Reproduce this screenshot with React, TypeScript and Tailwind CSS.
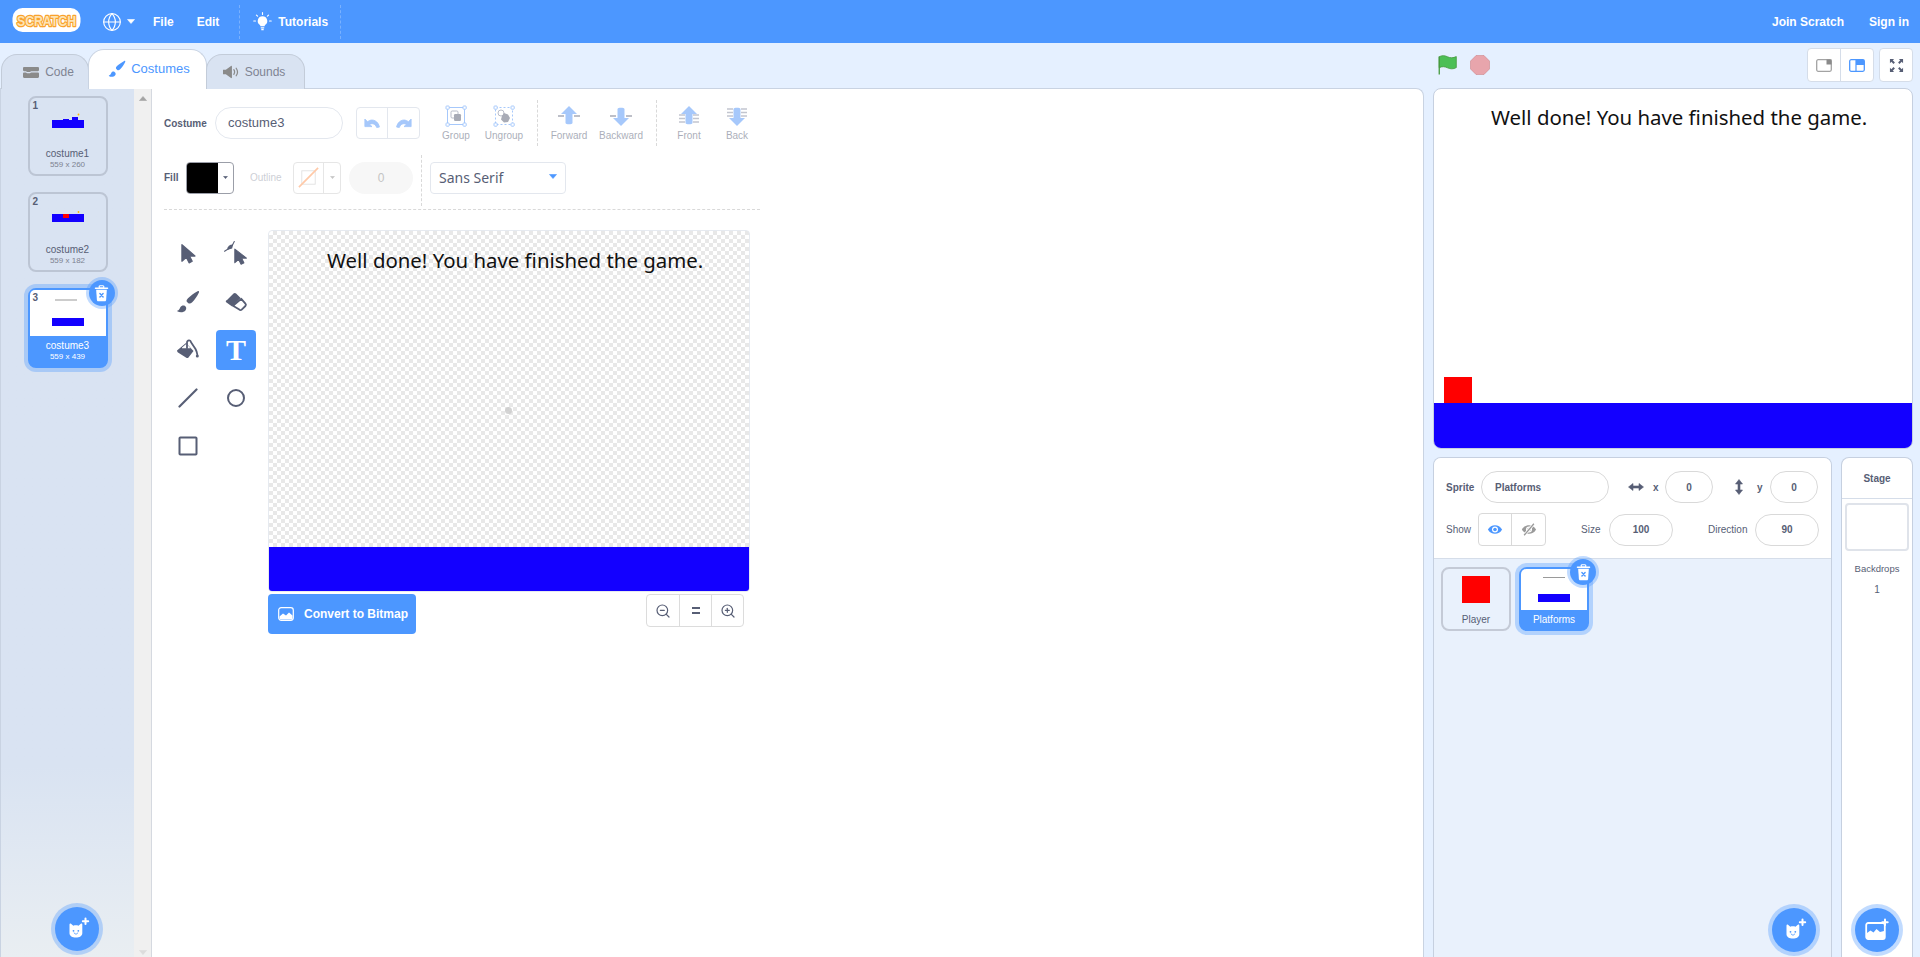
import React from "react";
import { Globe, ZoomIn, ZoomOut } from "lucide-react";

const G = "#575e75";
const B = "#4c97ff";

function Caret({ className = "" }: { className?: string }) {
  return (
    <svg viewBox="0 0 8 5" className={className}>
      <path d="M0.5 0.5h7L4 4.5z" fill="currentColor" stroke="currentColor" strokeWidth="0.6" strokeLinejoin="round" />
    </svg>
  );
}

function Logo() {
  const t = { x: 5, y: 19, fontFamily: "'Liberation Sans',sans-serif", fontWeight: 700, fontSize: 15, textLength: 59, lengthAdjust: "spacingAndGlyphs" as const };
  return (
    <svg viewBox="0 0 69 26" className="w-[69px] h-[26px] -mt-[4px] overflow-visible">
      <rect x="0.500" y="1" width="68" height="24" rx="10" fill="#fff" />
      <text {...t} fill="#fde3b4" stroke="#f9a22c" strokeWidth="2.600" strokeLinejoin="round" paintOrder="stroke">SCRATCH</text>
    </svg>
  );
}

function Bulb() {
  return (
    <svg viewBox="0 0 20 20" className="w-[19px] h-[19px]">
      <path d="M10 4.500a5 5 0 0 0-3 9c.6.500.8 1 .8 1.600h4.400c0-.6.2-1.100.8-1.600a5 5 0 0 0-3-9z" fill="#fff" />
      <rect x="8" y="16" width="4" height="1.400" rx=".7" fill="#fff" />
      <rect x="8.600" y="18" width="2.800" height="1.200" rx=".6" fill="#fff" />
      <path d="M10 .7v1.800M3.600 3.200l1.200 1.200M16.400 3.200l-1.200 1.200M.8 9.500h1.800M17.400 9.500h1.800" stroke="#fff" strokeWidth="1.200" strokeLinecap="round" />
    </svg>
  );
}

function CodeIcon() {
  return (
    <svg viewBox="0 0 16 11" className="w-4 h-[11px]">
      <path d="M0 1.200C0 .5.5 0 1.200 0h13.600c.7 0 1.200.5 1.200 1.200v1.800c0 .7-.5 1.200-1.200 1.200H8L7 5H4L3 4.200H1.200C.5 4.200 0 3.700 0 3z" fill="#8a8a8a" />
      <path d="M0 6.600c0-.6.5-1.100 1.200-1.100H3l1 .8h3l1-.8h6.800c.7 0 1.200.5 1.200 1.100v3.200c0 .7-.5 1.200-1.200 1.200H1.200C.5 11 0 10.500 0 9.800z" fill="#8a8a8a" />
    </svg>
  );
}

function BrushIcon({ color, className }: { color: string; className: string }) {
  return (
    <svg viewBox="0 0 20 20" className={className}>
      <path d="M18 1c.9-.4 1.500.3 1.100 1.100-1.400 2.900-3.500 6-5.600 8.200-1 1-2.200 1.300-3.200.8l-1.300-1.300c-.5-1 0-2 1-3C12 4.900 15.100 2.500 18 1z" fill={color} />
      <path d="M1 17.200c1.800-.2 2-1.700 2.700-3 .8-1.300 2.300-1.800 3.600-1 1.400.8 1.600 2.500.7 3.700-1.500 2-4.700 2.300-7 .8z" fill={color} />
    </svg>
  );
}

function SoundIcon() {
  return (
    <svg viewBox="0 0 17 14" className="w-[16px] h-[14px]">
      <path d="M0 4.500h3L8.500.5c.5-.3 1 0 1 .6v11.800c0 .6-.5.9-1 .6L3 9.500H0z" fill="#8a8a8a" />
      <path d="M11.500 4.500c1 1.500 1 3.500 0 5M14 3c1.800 2.500 1.800 5.500 0 8" stroke="#8a8a8a" strokeWidth="1.300" fill="none" strokeLinecap="round" />
    </svg>
  );
}

function Tab({ label, icon, active, width }: { label: string; icon: React.ReactNode; active?: boolean; width?: string }) {
  if (active) {
    return (
      <div className="w-[119px] h-[40px] -mb-px z-10 flex items-center justify-center gap-[5px] bg-white border border-b-0 border-[#c9d3e2] rounded-t-2xl text-[13px] text-[#4c97ff] pb-[1px] pl-[3px]">
        {icon}
        <span>{label}</span>
      </div>
    );
  }
  return (
    <div className={`${width} h-[35px] -mb-px flex items-center justify-center gap-[6px] bg-[#d9e3f2] border border-b-0 border-[#c3ccd9] rounded-t-2xl text-[12px] text-[#7f8492]`}>
      {icon}
      <span>{label}</span>
    </div>
  );
}

function Thumb1() {
  return (
    <svg viewBox="0 0 76 46" className="w-[76px] h-[46px]">
      <path d="M22 22h11v-1h6v1h3v-3h6v3h6v8H22z" fill="#1300ff" />
      <circle cx="48.500" cy="16.500" r=".9" fill="#ffb400" />
    </svg>
  );
}
function Thumb2() {
  return (
    <svg viewBox="0 0 76 46" className="w-[76px] h-[46px]">
      <rect x="22" y="20" width="32" height="8" fill="#1300ff" />
      <rect x="33" y="20" width="6" height="4" fill="#f00" />
      <circle cx="48.500" cy="18" r=".9" fill="#ffb400" />
    </svg>
  );
}
function Thumb3() {
  return (
    <svg viewBox="0 0 76 46" className="w-[76px] h-[46px]">
      <rect x="25" y="9.500" width="22" height="1" fill="#9a9a9a" />
      <rect x="22" y="28" width="32" height="8" fill="#1300ff" />
    </svg>
  );
}

function Trash() {
  return (
    <div className="absolute top-[-10px] right-[-9px] w-[26px] h-[26px] rounded-full bg-[#4c97ff] shadow-[0_0_0_3px_#4c97ff59] flex items-center justify-center">
      <svg viewBox="0 0 16 18" className="w-[15px] h-[17px]">
        <rect x="0.800" y="2.600" width="14.400" height="1.500" rx=".7" fill="#fff" />
        <rect x="5.500" y="0.700" width="5" height="2.500" rx="1" fill="none" stroke="#fff" strokeWidth="1.200" />
        <path d="M2.300 5h11.400l-.8 11c-.1.800-.6 1.300-1.300 1.300H4.400c-.7 0-1.200-.5-1.300-1.300z" fill="#fff" />
        <path d="M6.300 9l3.400 3.800M9.700 9l-3.400 3.800" stroke="#4c97ff" strokeWidth="1.500" strokeLinecap="round" />
      </svg>
    </div>
  );
}

function CostumeCard({ n, name, dims, selected, thumb }: { n: number; name: string; dims: string; selected?: boolean; thumb: React.ReactNode }) {
  return (
    <div className={selected
      ? "relative w-[80px] h-[80px] shrink-0 border-2 border-[#4c97ff] rounded-lg bg-[#4c97ff] shadow-[0_0_0_4px_#4c97ff59]"
      : "relative w-[80px] h-[80px] shrink-0 border-2 border-[#bcc5d4] rounded-lg"}>
      <div className={selected ? "bg-white rounded-t-[5px]" : ""}>{thumb}</div>
      <div className={selected ? "text-center text-white" : "text-center text-[#575e75]"}>
        <div className="text-[10px] leading-[12px] mt-[4px]">{name}</div>
        <div className={selected ? "text-[8px] leading-[10px]" : "text-[8px] leading-[10px] text-[#7d8291]"}>{dims}</div>
      </div>
      <span className="absolute left-[3px] top-[1px] text-[10px] leading-[14px] font-bold text-[#575e75]">{n}</span>
      {selected && <Trash />}
    </div>
  );
}

function Cat() {
  return (
    <svg viewBox="-2 0 26 26" className="w-[26px] h-[26px]">
      <path d="M3.500 8.500c0-.8.9-1.200 1.500-.7l2.300 1.900c1.600-.5 3.600-.5 5.200 0l2.300-1.900c.6-.5 1.500-.1 1.500.7v8.700c0 2.800-2.800 4.300-6.400 4.300s-6.400-1.500-6.400-4.300z" fill="#fff" />
      <circle cx="7.500" cy="14.800" r=".9" fill="#4c97ff" />
      <circle cx="12.300" cy="14.800" r=".9" fill="#4c97ff" />
      <path d="M8.300 17c.4 1.100 1 1.300 1.600.8.600.5 1.200.3 1.600-.8" fill="none" stroke="#4c97ff" strokeWidth=".9" strokeLinecap="round" />
      <path d="M19.500 2.500v5.400M16.800 5.200h5.400" stroke="#fff" strokeWidth="2" strokeLinecap="round" />
    </svg>
  );
}

function Backdrop() {
  return (
    <svg viewBox="0 0 24 24" className="w-[24px] h-[24px]">
      <rect x="1.200" y="5" width="18.600" height="16" rx="2" fill="none" stroke="#fff" strokeWidth="1.800" />
      <path d="M2 20v-5l3.500-2.500 3 2 3-3.500 3.500 3 4-1v7z" fill="#fff" />
      <path d="M20 1.500v5.400M17.300 4.200h5.400" stroke="#fff" strokeWidth="2" strokeLinecap="round" />
    </svg>
  );
}

function AddButton({ icon }: { icon: React.ReactNode }) {
  return (
    <div className="w-[44px] h-[44px] shrink-0 rounded-full bg-[#4c97ff] shadow-[0_0_0_4px_#4c97ff59] flex items-center justify-center">
      {icon}
    </div>
  );
}

function GroupIcon({ un }: { un?: boolean }) {
  return (
    <svg viewBox="0 0 22 22" className="w-[22px] h-[22px]">
      <rect x="2.500" y="2.500" width="17" height="17" fill="none" stroke="#a6c8fb" strokeWidth="1" strokeDasharray={un ? "2 2" : undefined} />
      {[[1, 1], [18, 1], [1, 18], [18, 18]].map(([x, y], i) => (
        <rect key={i} x={x} y={y} width="3.200" height="3.200" rx=".7" fill="#fff" stroke="#a6c8fb" strokeWidth="1" />
      ))}
      {un ? (
        <>
          <circle cx="8" cy="8" r="3" fill="#fff" stroke="#b8bcc8" strokeWidth="1" />
          <path d="M11 8l4 1.500 2 3.500-2 4-4 .5-3-3 1-3.500z" fill="#a8abb6" />
        </>
      ) : (
        <>
          <rect x="6" y="6" width="7" height="7" rx="1.200" fill="#fff" stroke="#b8bcc8" strokeWidth="1" />
          <rect x="9" y="9" width="7" height="7" rx="1.200" fill="#a8abb6" />
        </>
      )}
    </svg>
  );
}

function LayerIcon({ dir, lines }: { dir: "up" | "down"; lines: "one" | "many" }) {
  const arrow = dir === "up" ? "M11 1l8 8h-4.500v9c0 1.800-7 1.800-7 0V9H3z" : "M11 21l8-8h-4.500V4c0-1.800-7-1.800-7 0v9H3z";
  return (
    <svg viewBox="0 0 22 22" className="w-[22px] h-[22px]">
      {lines === "one" ? (
        <path d="M0 11h6M16 11h6" stroke="#a8abb6" strokeWidth="1.500" />
      ) : (
        <path d={dir === "up" ? "M1 10h6M15 10h6M1 13.500h6M15 13.500h6M1 17h6M15 17h6" : "M1 4h6M15 4h6M1 7.500h6M15 7.500h6M1 11h6M15 11h6"} stroke="#c2c5cf" strokeWidth="1.500" />
      )}
      <path d={arrow} fill="#a6c8fb" />
    </svg>
  );
}

function ToolAction({ label, width, icon }: { label: string; width: string; icon: React.ReactNode }) {
  return (
    <div className={`${width} flex flex-col items-center`}>
      {icon}
      <span className="text-[10px] leading-[12px] mt-[3px] text-[#575e75] opacity-50">{label}</span>
    </div>
  );
}

function Undo({ flip }: { flip?: boolean }) {
  return (
    <svg viewBox="0 0 18 14" className={flip ? "w-[16px] h-[13px] -scale-x-100" : "w-[16px] h-[13px]"}>
      <path d="M1 2v8.500h8L6.300 8c1.800-1.300 6.200-1.600 8 3.500l3-.5C16.300 4.500 9.500.5 4 5z" fill="#a6c8fb" stroke="#a6c8fb" strokeWidth="1" strokeLinejoin="round" />
    </svg>
  );
}

function Cursor({ className = "w-[20px] h-[20px]" }: { className?: string }) {
  return (
    <svg viewBox="0 0 20 20" className={className}>
      <path d="M4.500 1.500v15l4-3.500 2.500 5 2.800-1.400-2.500-4.800h5z" fill={G} stroke={G} strokeWidth="1.200" strokeLinejoin="round" />
    </svg>
  );
}

function Tool({ children, active }: { children: React.ReactNode; active?: boolean }) {
  return (
    <div className="w-[48px] h-[48px] flex items-center justify-center">
      {active ? <div className="w-[40px] h-[40px] rounded-[4px] bg-[#4c97ff] flex items-center justify-center">{children}</div> : children}
    </div>
  );
}

function Pill({ className, children }: { className: string; children?: React.ReactNode }) {
  return <div className={`${className} h-[32px] shrink-0 rounded-full bg-white border border-[#d9d9d9] flex items-center text-[10px] font-bold text-[#575e75]`}>{children}</div>;
}

function SmallEye({ off }: { off?: boolean }) {
  const c = off ? "#9a9a9a" : B;
  return (
    <svg viewBox="0 0 18 14" className="w-[16px] h-[13px]">
      <path d="M1 7c3.500-6.500 12.500-6.500 16 0-3.500 6.500-12.500 6.500-16 0z" fill={c} />
      <circle cx="9" cy="7" r="3.400" fill="#fff" />
      <circle cx="9" cy="7" r="2" fill={c} />
      {off && <path d="M14.500 .5L3.500 13.500" stroke="#fff" strokeWidth="3.200" />}
      {off && <path d="M14.500 .5L3.500 13.500" stroke={c} strokeWidth="1.500" />}
    </svg>
  );
}

function Arrows({ vertical }: { vertical?: boolean }) {
  return (
    <svg viewBox="0 0 16 16" className={vertical ? "w-[16px] h-[16px] rotate-90" : "w-[16px] h-[16px]"}>
      <path d="M0.500 8L5 4.500v2.500h6V4.500L15.500 8 11 11.500V9H5v2.500z" fill={G} stroke={G} strokeWidth=".6" strokeLinejoin="round" />
    </svg>
  );
}

export default function App() {
  return (
    <div className="w-[1920px] h-[957px] overflow-hidden flex flex-col bg-[#e5f0ff] font-['Liberation_Sans',sans-serif] text-[#575e75]">
      {/* header */}
      <header className="h-[43px] shrink-0 bg-[#4c97ff] flex items-center text-white text-[12px] font-bold pl-[12px] pr-[11px]">
        <Logo />
        <Globe className="w-[20px] h-[20px] ml-[21px]" strokeWidth={1.400} />
        <Caret className="w-[8px] h-[5px] ml-[5px]" />
        <span className="ml-[18px]">File</span>
        <span className="ml-[23px]">Edit</span>
        <div className="ml-[20px] h-[34px] border-l border-dashed border-[#ffffff40]" />
        <div className="ml-[13px]"><Bulb /></div>
        <span className="ml-[6px]">Tutorials</span>
        <div className="ml-[12px] h-[34px] border-l border-dashed border-[#ffffff40]" />
        <span className="ml-auto">Join Scratch</span>
        <span className="ml-[25px]">Sign in</span>
      </header>

      <div className="flex-1 min-h-0 flex">
        {/* left column */}
        <div className="w-[1424px] shrink-0 flex flex-col min-h-0">
          <div className="h-[45px] shrink-0 flex items-end pl-[1px] relative">
            <Tab label="Code" width="w-[88px] pl-[7px]" icon={<CodeIcon />} />
            <div className="-ml-[1px]">
              <Tab active label="Costumes" icon={<BrushIcon color={B} className="w-[18px] h-[18px]" />} />
            </div>
            <div className="-ml-[1px]">
              <Tab label="Sounds" width="w-[99px] pr-[3px]" icon={<SoundIcon />} />
            </div>
          </div>
          <div className="flex-1 min-h-0 flex border-t border-r border-l border-[#c9d3e2] rounded-tr-lg bg-white overflow-hidden">
            {/* costume list */}
            <div className="w-[133px] shrink-0 bg-linear-to-b from-[#d9e3f2] from-[78%] to-[#e9eef2] flex flex-col items-center pt-[7px] gap-[16px] pb-[6px]">
              <CostumeCard n={1} name="costume1" dims="559 x 260" thumb={<Thumb1 />} />
              <CostumeCard n={2} name="costume2" dims="559 x 182" thumb={<Thumb2 />} />
              <CostumeCard n={3} name="costume3" dims="559 x 439" selected thumb={<Thumb3 />} />
              <div className="mt-auto ml-[18px]"><AddButton icon={<Cat />} /></div>
            </div>
            {/* scrollbar */}
            <div className="w-[18px] shrink-0 bg-[#f0f0f0] border-r border-[#d5d9e0] flex flex-col items-center justify-between pt-[7px] pb-[2px]">
              <Caret className="w-[8px] h-[5px] rotate-180 text-[#a3a3a3]" />
              <Caret className="w-[8px] h-[5px] text-[#dcdcdc]" />
            </div>
            {/* paint editor */}
            <div className="flex-1 min-w-0 pl-[12px] pt-[11px]">
              <div className="h-[46px] flex items-center">
                <span className="w-[43px] text-[10px] font-bold whitespace-nowrap">Costume</span>
                <div className="ml-[8px] w-[128px] h-[32px] rounded-full border border-[#e3e7ee] flex items-center pl-[12px] text-[13px]">costume3</div>
                <div className="ml-[13px] w-[64px] h-[32px] rounded-[4px] border border-[#e3e7ee] flex items-center">
                  <div className="w-[31px] flex justify-center border-r border-[#e3e7ee] h-full items-center"><Undo /></div>
                  <div className="flex-1 flex justify-center"><Undo flip /></div>
                </div>
                <div className="ml-[12px] flex">
                  <ToolAction label="Group" width="w-[48px]" icon={<GroupIcon />} />
                  <ToolAction label="Ungroup" width="w-[48px]" icon={<GroupIcon un />} />
                </div>
                <div className="ml-[9px] h-[46px] border-l border-dashed border-[#d9d9d9]" />
                <div className="ml-[6px] flex gap-[2px]">
                  <ToolAction label="Forward" width="w-[50px]" icon={<LayerIcon dir="up" lines="one" />} />
                  <ToolAction label="Backward" width="w-[50px]" icon={<LayerIcon dir="down" lines="one" />} />
                </div>
                <div className="ml-[10px] h-[46px] border-l border-dashed border-[#d9d9d9]" />
                <div className="ml-[8px] flex">
                  <ToolAction label="Front" width="w-[48px]" icon={<LayerIcon dir="up" lines="many" />} />
                  <ToolAction label="Back" width="w-[48px]" icon={<LayerIcon dir="down" lines="many" />} />
                </div>
              </div>

              <div className="mt-[9px] h-[51px] pb-[6px] flex items-center">
                <span className="w-[15px] text-[10px] font-bold">Fill</span>
                <div className="ml-[7px] w-[48px] h-[32px] rounded-[4px] border border-[#9b9ea8] flex overflow-hidden">
                  <div className="w-[31px] bg-black" />
                  <div className="flex-1 flex items-center justify-center"><Caret className="w-[5px] h-[3px] text-[#575e75]" /></div>
                </div>
                <span className="ml-[16px] w-[34px] text-[10px] opacity-30">Outline</span>
                <div className="ml-[9px] w-[48px] h-[32px] rounded-[4px] border border-[#e6e6e6] flex">
                  <div className="w-[30px] border-r border-[#e6e6e6] flex items-center justify-center">
                    <svg viewBox="0 0 24 24" className="w-[23px] h-[23px]">
                      <rect x="5" y="5" width="14" height="14" fill="none" stroke="#e3e3e3" strokeWidth="1" />
                      <path d="M2 22L22 2" stroke="#ffc9a8" strokeWidth="1.800" />
                    </svg>
                  </div>
                  <div className="flex-1 flex items-center justify-center"><Caret className="w-[5px] h-[3px] text-[#c5c5c5]" /></div>
                </div>
                <div className="ml-[8px] w-[64px] h-[32px] rounded-full bg-[#f7f7f7] flex items-center justify-center text-[12px] text-[#c4c4c4]">0</div>
                <div className="ml-[8px] self-start h-[51px] border-l border-dashed border-[#d9d9d9]" />
                <div className="ml-[8px] w-[136px] h-[32px] rounded-[4px] border border-[#e3e7ee] flex items-center justify-between pl-[8px] pr-[8px] font-['Noto_Sans',sans-serif] text-[14px]">
                  <span>Sans Serif</span>
                  <Caret className="w-[8px] h-[5px] text-[#4c97ff] -mt-[3px]" />
                </div>
              </div>

              <div className="mt-[3px] w-[596px] border-t border-dashed border-[#d9d9d9]" />

              <div className="mt-[20px] flex items-start">
                <div className="w-[96px] grid grid-cols-2">
                  <Tool><Cursor className="w-[22px] h-[22px]" /></Tool>
                  <Tool>
                    <svg viewBox="0 0 24 24" className="w-[26px] h-[26px] ml-[1px]">
                      <path d="M10 7.500v12.500l3.500-3 2.300 4.500 2.600-1.300-2.200-4.400h4.500z" fill={G} stroke={G} strokeWidth="1" strokeLinejoin="round" />
                      <path d="M8.500 3.200a5 5 0 0 0-5.600 5l4.600-1.300z" fill={G} />
                      <path d="M9.500 .5L7.700 4M.5 9.500L4.500 7" stroke={G} strokeWidth="1" strokeLinecap="round" />
                    </svg>
                  </Tool>
                  <Tool><BrushIcon color={G} className="w-[24px] h-[24px]" /></Tool>
                  <Tool>
                    <svg viewBox="0 0 24 24" className="w-[24px] h-[24px]">
                      <path d="M2.500 10.500l7-7c.8-.8 1.800-.8 2.600 0l4.500 4.500-8.500 8.500-5.600-3.900c-.9-.6-1-1.800 0-2.600z" fill={G} />
                      <path d="M17.300 8.800l4.100 4.900c.7.800.6 1.700 0 2.300l-3.700 3.600c-.7.700-1.700.7-2.400 0l-6.300-3.800z" fill="#fff" stroke={G} strokeWidth="1.800" strokeLinejoin="round" />
                    </svg>
                  </Tool>
                  <Tool>
                    <svg viewBox="0 0 24 24" className="w-[24px] h-[24px]">
                      <path d="M1 12.500L10 5l7.500 8-5 6.500c-.6.700-1.500.7-2.200.2L2 14.500c-.8-.6-.8-1.400-1-2z" fill={G} />
                      <path d="M6 9.500l4.500-3.700 4 4.500H6z" fill="#fff" />
                      <path d="M11 10V4.500a2 2 0 0 1 4-.2L19.500 11c.8 1.500 1.500 3 1.800 5.500" fill="none" stroke={G} strokeWidth="1.800" strokeLinecap="round" />
                      <circle cx="21.300" cy="18" r="1.500" fill={G} />
                    </svg>
                  </Tool>
                  <Tool active>
                    <span className="font-['Liberation_Serif',serif] font-bold text-[30px] leading-none text-white">T</span>
                  </Tool>
                  <Tool>
                    <svg viewBox="0 0 20 20" className="w-[20px] h-[20px]"><path d="M1.500 18.500L18.500 1.500" stroke={G} strokeWidth="2.200" strokeLinecap="round" /></svg>
                  </Tool>
                  <Tool>
                    <svg viewBox="0 0 20 20" className="w-[20px] h-[20px]"><circle cx="10" cy="10" r="8" fill="none" stroke={G} strokeWidth="2" /></svg>
                  </Tool>
                  <Tool>
                    <svg viewBox="0 0 20 20" className="w-[20px] h-[20px]"><rect x="1.500" y="1.500" width="17" height="17" rx=".8" fill="none" stroke={G} strokeWidth="2" /></svg>
                  </Tool>
                </div>
                <div className="ml-[8px] w-[482px]">
                  <div className="relative h-[362px] border border-[#e6eaf0] rounded-[4px] overflow-hidden flex flex-col bg-[repeating-conic-gradient(#e8e8e8_0%_25%,#ffffff_0%_50%)] bg-[length:8px_8px]">
                    <div className="pl-[58px] pt-[14px] h-[316px] font-['Noto_Sans',sans-serif] text-[20.4px] leading-[30px] text-[#111] whitespace-nowrap">Well done! You have finished the game.</div>
                    <div className="h-[44px] bg-[#1300ff]" />
                    <div className="absolute left-[236px] top-[176px] w-[7px] h-[7px] rounded-full bg-[#c9c9c9] opacity-80" />
                  </div>
                  <div className="mt-[2px] flex items-start justify-between pr-[6px]">
                    <div className="w-[148px] h-[40px] rounded-[4px] bg-[#4c97ff] flex items-center pl-[10px] text-white text-[12px] font-bold">
                      <svg viewBox="0 0 16 14" className="w-[16px] h-[14px] mr-[10px]">
                        <rect x=".7" y=".7" width="14.600" height="12.600" rx="2.500" fill="none" stroke="#fff" strokeWidth="1.200" />
                        <path d="M1.500 12.500v-3l3.500-3 3 2 3-3 3.500 3v4z" fill="#fff" />
                      </svg>
                      Convert to Bitmap
                    </div>
                    <div className="w-[98px] h-[33px] rounded-[4px] border border-[#dcdcdc] flex">
                      <div className="w-[33px] flex items-center justify-center border-r border-[#dcdcdc]"><ZoomOut className="w-[16px] h-[16px]" strokeWidth={1.800} /></div>
                      <div className="w-[32px] flex items-center justify-center border-r border-[#dcdcdc]">
                        <div className="w-[8px] h-[7px] border-y-2 border-[#575e75]" />
                      </div>
                      <div className="flex-1 flex items-center justify-center"><ZoomIn className="w-[16px] h-[16px]" strokeWidth={1.800} /></div>
                    </div>
                  </div>
                </div>
              </div>
            </div>
          </div>
        </div>

        {/* right column */}
        <div className="ml-[9px] w-[480px] shrink-0 flex flex-col min-h-0">
          <div className="h-[45px] shrink-0 flex items-start pt-[5px]">
            <svg viewBox="0 0 20 20" className="w-[20px] h-[20px] ml-[5px] mt-[7px]">
              <path d="M1.200 1.800c3-1.700 5.500-1.400 8.300 0 2.700 1.300 5.700 1.300 8.800-.2v11c-3 1.700-6 1.500-8.800.2-2.800-1.300-5.300-1.600-8.300-.1z" fill="#4cbf56" stroke="#45993d" strokeWidth=".8" />
              <rect x=".6" y="1.500" width="1.300" height="18" fill="#45993d" />
            </svg>
            <svg viewBox="0 0 20 20" className="w-[20px] h-[20px] ml-[12px] mt-[7px]">
              <path d="M6 .5h8L19.500 6v8L14 19.500H6L.5 14V6z" fill="#ec5959" fillOpacity=".5" stroke="#b84848" strokeOpacity=".3" />
            </svg>
            <div className="ml-auto flex">
              <div className="w-[67px] h-[34px] rounded-[4px] bg-white border border-[#d5dde9] flex">
                <div className="w-[33px] flex items-center justify-center border-r border-[#d5dde9]">
                  <svg viewBox="0 0 16 13" className="w-[16px] h-[13px]">
                    <rect x=".7" y=".7" width="14.600" height="11.600" rx="1.500" fill="none" stroke="#a3a3a3" strokeWidth="1.300" />
                    <rect x="10.500" y=".5" width="5" height="5" fill="#8a8a8a" />
                  </svg>
                </div>
                <div className="flex-1 flex items-center justify-center">
                  <svg viewBox="0 0 16 13" className="w-[16px] h-[13px]">
                    <rect x=".7" y=".7" width="14.600" height="11.600" rx="1.500" fill="none" stroke={B} strokeWidth="1.300" />
                    <path d="M7 .7h7.500c.5 0 .8.3.8.8V6H7z" fill={B} />
                    <path d="M7 .7v11.600" stroke={B} strokeWidth="1.200" />
                  </svg>
                </div>
              </div>
              <div className="ml-[5px] w-[34px] h-[34px] rounded-[4px] bg-white border border-[#d5dde9] flex items-center justify-center">
                <svg viewBox="0 0 16 16" className="w-[15px] h-[15px]">
                  <path d="M1 1h4.500L4 2.500l2.300 2.300-1.500 1.500L2.500 4 1 5.500zM15 1v4.500L13.500 4l-2.300 2.300-1.500-1.500L12 2.500 10.500 1zM1 15v-4.500L2.500 12l2.300-2.300 1.500 1.500L4 13.500 5.500 15zM15 15h-4.500L12 13.500l-2.300-2.300 1.500-1.500 2.300 2.300 1.500-1.500z" fill={G} />
                </svg>
              </div>
            </div>
          </div>

          <div className="h-[361px] shrink-0 border border-[#c6d0e0] rounded-lg bg-white overflow-hidden flex flex-col">
            <div className="flex-1 min-h-0 flex flex-col">
              <div className="pl-[57px] pt-[13px] font-['Noto_Sans',sans-serif] text-[20.4px] leading-[30px] text-[#111] whitespace-nowrap">Well done! You have finished the game.</div>
              <div className="mt-auto ml-[10px] w-[28px] h-[26px] bg-[#f00]" />
            </div>
            <div className="h-[45px] shrink-0 bg-[#1300ff]" />
          </div>

          <div className="mt-[8px] flex-1 min-h-0 flex">
            {/* sprite panel */}
            <div className="w-[399px] shrink-0 border border-b-0 border-[#c6d0e0] rounded-t-lg bg-[#e9f1fc] flex flex-col overflow-hidden">
              <div className="h-[101px] shrink-0 bg-white border-b border-[#d5dde9] pl-[12px] pt-[13px] flex flex-col gap-[10px]">
                <div className="flex items-center h-[32px]">
                  <span className="w-[27px] text-[10px] font-bold">Sprite</span>
                  <Pill className="ml-[8px] w-[128px] pl-[13px]">Platforms</Pill>
                  <div className="ml-[19px]"><Arrows /></div>
                  <span className="ml-[9px] w-[6px] text-[10px] font-bold">x</span>
                  <Pill className="ml-[6px] w-[48px] justify-center">0</Pill>
                  <div className="ml-[18px]"><Arrows vertical /></div>
                  <span className="ml-[10px] w-[6px] text-[10px] font-bold">y</span>
                  <Pill className="ml-[7px] w-[48px] justify-center">0</Pill>
                </div>
                <div className="flex items-center h-[33px]">
                  <span className="w-[25px] text-[10px]">Show</span>
                  <div className="ml-[7px] w-[68px] h-[33px] rounded-[4px] border border-[#d9d9d9] flex">
                    <div className="w-[33px] flex items-center justify-center border-r border-[#d9d9d9]"><SmallEye /></div>
                    <div className="flex-1 flex items-center justify-center"><SmallEye off /></div>
                  </div>
                  <span className="ml-[35px] w-[19px] text-[10px]">Size</span>
                  <Pill className="ml-[9px] w-[64px] justify-center">100</Pill>
                  <span className="ml-[35px] w-[39px] text-[10px]">Direction</span>
                  <Pill className="ml-[8px] w-[64px] justify-center">90</Pill>
                </div>
              </div>
              <div className="flex-1 min-h-0 flex flex-col pl-[7px] pt-[8px] pb-[5px] pr-[15px]">
                <div className="flex gap-[8px]">
                  <div className="w-[70px] h-[64px] border-2 border-[#c4cad6] rounded-lg flex flex-col items-center">
                    <div className="h-[41px] pt-[7px] w-full flex justify-center">
                      <div className="w-[28px] h-[27px] bg-[#f00]" />
                    </div>
                    <span className="text-[10px] leading-[19px]">Player</span>
                  </div>
                  <div className="relative w-[70px] h-[64px] border-2 border-[#4c97ff] rounded-lg bg-[#4c97ff] shadow-[0_0_0_4px_#4c97ff59] flex flex-col">
                    <div className="h-[41px] bg-white rounded-t-[5px] pt-[8px] flex flex-col items-center">
                      <div className="w-[22px] h-[1px] bg-[#9a9a9a]" />
                      <div className="mt-[16px] w-[32px] h-[8px] bg-[#1300ff]" />
                    </div>
                    <span className="text-[10px] leading-[19px] text-white text-center">Platforms</span>
                    <Trash />
                  </div>
                </div>
                <div className="mt-auto self-end"><AddButton icon={<Cat />} /></div>
              </div>
            </div>
            {/* stage selector */}
            <div className="ml-[9px] w-[72px] shrink-0 border border-b-0 border-[#c6d0e0] rounded-t-lg bg-white flex flex-col items-center pb-[5px]">
              <div className="h-[41px] w-full shrink-0 border-b border-[#d5dde9] flex items-center justify-center text-[10px] font-bold">Stage</div>
              <div className="mt-[4px] w-[64px] h-[48px] rounded-[4px] border-2 border-[#dfe3ea]" />
              <span className="mt-[11px] text-[9.5px] leading-[14px]">Backdrops</span>
              <span className="mt-[7px] text-[10px] leading-[14px]">1</span>
              <div className="mt-auto"><AddButton icon={<Backdrop />} /></div>
            </div>
          </div>
        </div>
      </div>
    </div>
  );
}
